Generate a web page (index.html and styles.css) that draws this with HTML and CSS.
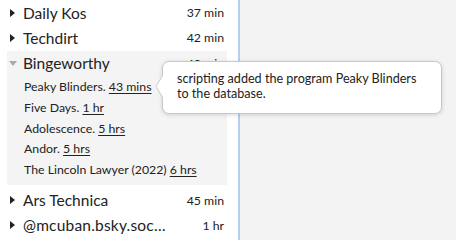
FILE: index.html
```html
<!DOCTYPE html>
<html>
<head>
<meta charset="utf-8">
<link rel="stylesheet" href="styles.css">
</head>
<body>
<div class="app">
  <div class="sidebar">
    <div class="row"><span class="tri right"></span><span class="name">Daily Kos</span><span class="time">37 min</span></div>
    <div class="row"><span class="tri right"></span><span class="name">Techdirt</span><span class="time">42 min</span></div>
    <div class="group">
      <div class="row head"><span class="tri down"></span><span class="name">Bingeworthy</span><span class="time">42 min</span></div>
      <div class="child">Peaky Blinders. <u>43 mins</u></div>
      <div class="child">Five Days. <u>1 hr</u></div>
      <div class="child">Adolescence. <u>5 hrs</u></div>
      <div class="child">Andor. <u>5 hrs</u></div>
      <div class="child">The Lincoln Lawyer (2022) <u>6 hrs</u></div>
    </div>
    <div class="row"><span class="tri right"></span><span class="name">Ars Technica</span><span class="time">45 min</span></div>
    <div class="row"><span class="tri right"></span><span class="name short">@mcuban.bsky.social</span><span class="time">1 hr</span></div>
  </div>
  <div class="main"></div>
  <div class="tooltip">
    <svg class="arrow" width="9" height="26" viewBox="0 0 9 26"><polygon points="8.5,0 1,12.5 8.5,25" fill="#fff" stroke="#c8c8c8" stroke-width="1"/><rect x="8" y="0" width="2" height="26" fill="#fff"/></svg>
    scripting added the program Peaky Blinders to the database.
  </div>
</div>
</body>
</html>
```
FILE: styles.css
```css
html, body { margin: 0; padding: 0; }
body {
  font-family: "Lato", "Noto Sans", sans-serif;
  color: #222;
  width: 456px;
  height: 240px;
  overflow: hidden;
}
.app { display: flex; height: 240px; position: relative; }
.sidebar {
  width: 220px;
  padding: 0 11px 0 7px;
  background: #fff;
  border-right: 2px solid #b3cef2;
}
.main { flex: 1; background: #f3f3f3; }
.row {
  display: flex;
  align-items: center;
  height: 25px;
  padding: 0 3px 0 2px;
}
.tri { width: 14px; flex: none; display: flex; align-items: center; }
.tri.right::before {
  content: "";
  display: block;
  border-left: 5px solid #222;
  border-top: 4px solid transparent;
  border-bottom: 4px solid transparent;
  margin-left: 1px;
}
.tri.down::before {
  content: "";
  display: block;
  border-top: 5px solid #aaa;
  border-left: 4.5px solid transparent;
  border-right: 4.5px solid transparent;
}
.name {
  flex: 1;
  font-size: 15.5px;
  white-space: nowrap;
  overflow: hidden;
  text-overflow: ellipsis;
  min-width: 0;
}
.name.short { flex: 0 1 146px; margin-right: auto; letter-spacing: 0.2px; }
.time { font-size: 12.3px; margin-left: 8px; white-space: nowrap; }
.group {
  background: #f4f4f4;
  margin: 1px 0 3px;
  padding-bottom: 4px;
}
.group .row.head { height: 24px; margin-bottom: 2px; }
.child {
  font-size: 12.3px;
  height: 20.75px;
  line-height: 20.75px;
  padding-left: 17px;
  white-space: nowrap;
}
.child u { text-underline-offset: 2px; }
.tooltip {
  position: absolute;
  left: 162px;
  top: 61px;
  width: 245px;
  height: 33px;
  padding: 9px 19px 9px 14px;
  font-size: 12.6px;
  line-height: 15px;
  background: #fff;
  border: 1px solid #c8c8c8;
  border-radius: 7px;
  box-shadow: 0 1px 4px rgba(0,0,0,0.15);
}
.arrow { position: absolute; left: -8px; top: 12px; }
```
